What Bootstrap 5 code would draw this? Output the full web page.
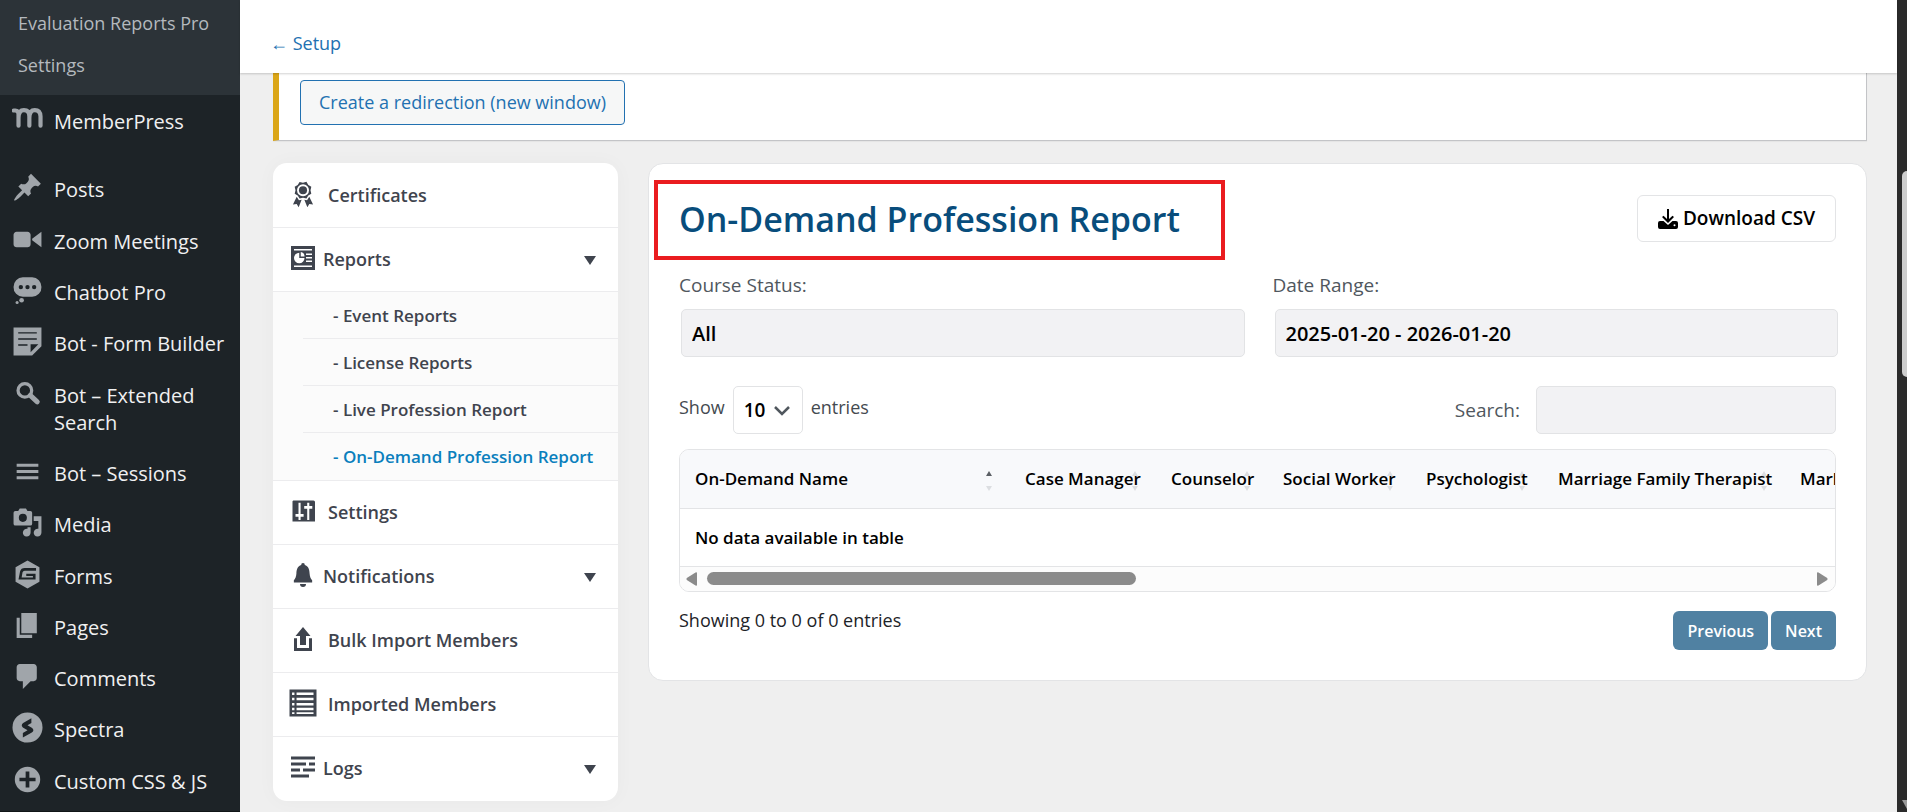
<!DOCTYPE html>
<html lang="en">
<head>
<meta charset="utf-8">
<meta name="viewport" content="width=device-width, initial-scale=1">
<title>On-Demand Profession Report</title>
<link href="https://cdn.jsdelivr.net/npm/bootstrap@5.3.0/dist/css/bootstrap.min.css" rel="stylesheet">
<style>
  :root { --ink: #3f444e; --line: #ececee; --edge: #e3e4e6; --wp-blue: #2271b1; }
  body { font-family: "Open Sans", "Noto Sans", sans-serif; font-size: 20px; line-height: 27px; background: #efefef; color: #1d2327; }
  a { text-decoration: none; }
  .icon { fill: currentColor; flex: none; }

  /* admin menu */
  .admin-menu { width: 240px; background: #1d2327; border-bottom: 1px solid #101517; }
  .submenu { background: #2c3338; height: 95px; padding: 10px 0 0 18px; }
  .submenu a { display: block; color: #b4b9be; font-size: 18px; margin-bottom: 15px; }
  .menu-list { padding: 1px 0 4px; }
  .menu-list li { flex: 1 0 auto; }
  .menu-list li.gap-after { margin-bottom: 17px; }
  .menu-list a { color: #f0f0f1; padding: 12px 8px 12px 12px; gap: 11px; }
  .menu-list .icon { width: 31px; height: 31px; margin-top: -4px; margin-bottom: -4px; color: #a0a5aa; }

  /* window scrollbar */
  .page-scroll { width: 10px; background: #2b2b2b; }
  .page-scroll i { top: 171px; left: 5px; right: 0; height: 206px; background: #cdcdcd; border-radius: 5px 0 0 5px; }
  .page-scroll b { bottom: 3px; left: 5px; border: 5px solid transparent; border-top: 9px solid #9b9b9b; border-bottom: 0; border-right: 0; }

  .topbar { height: 73px; padding: 14px 30px 0; box-shadow: 0 1px 2px rgba(0,0,0,.18); z-index: 1; }
  .topbar a, .btn-redirect { color: var(--wp-blue); }
  .topbar a { font-size: 18px; }
  .content { padding: 0 30px 11px 33px; }
  .notice { background: #fff; border: 1px solid #c3c4c7; border-top: 0; border-left: 6px solid #dba617; padding: 7px 21px 15px; box-shadow: 0 1px 1px rgba(0,0,0,.04); }
  .btn-redirect { font-size: 18px; line-height: 27px; padding: 8px 18px; background: #f6f7f7; border-color: var(--wp-blue); border-radius: 4px; }

  /* setup navigation */
  .setup-nav { width: 345px; border-radius: 14px; box-shadow: 0 0 20px rgba(0,0,0,.03); flex: none; color: var(--ink); font-weight: 600; padding-bottom: 1px; }
  .setup-nav a { color: inherit; }
  .nav-row { height: 64px; padding: 0 21px 0 15px; gap: 10px; font-size: 18px; }
  .nav-row.has-sub { gap: 5px; }
  .setup-nav > ul > li + li .nav-row { border-top: 1px solid var(--line); }
  .nav-row .icon { width: 30px; height: 30px; margin-top: -3px; }
  .nav-row .caret { width: 14px; height: 10px; margin: 0 0 0 auto; }
  .sub-list { background: #fbfbfb; border-top: 1px solid var(--line); padding: 0 0 1px 30px; font-size: 17px; }
  .sub-list li + li { border-top: 1px solid var(--line); }
  .sub-list a { display: block; padding: 10px 0 9px 30px; }
  .sub-list a.active { color: #0a7fbd; }

  /* report card */
  .report { border: 1px solid var(--edge); border-radius: 15px; padding: 16px 30px 30px; margin-left: 30px; min-width: 0; }
  .title-box { border: 4px solid #ea1c1f; margin-left: -25px; padding: 13px 41px 15px 21px; height: 80px; }
  .title-box h1 { font-size: 34px; line-height: 44px; font-weight: 600; color: #084d7c; }
  .btn-csv { margin-top: 15px; height: 47px; padding: 0 20px; border: 1px solid var(--edge); border-radius: 6px; font-size: 19px; font-weight: 600; color: #000; background: #fff; gap: 5px; }
  .field-label { color: #50575e; font-size: 19px; font-weight: 500; }
  .box-field { height: 48px; border: 1px solid #e2e3e5; border-radius: 5px; background: #f2f2f4; padding: 1px 10px 0; font-size: 20px; font-weight: 600; color: #000; appearance: none; }
  .filters { gap: 28px; margin: 12px -2px 0 0; }
  .filters .box-field { width: calc(100% - 2px); margin: 10px 0 0 2px; }
  .tools { margin-top: 29px; }
  .entries { font-size: 18px; color: #444a50; }
  .len-select { width: 70px; height: 48px; border: 1px solid #e2e3e5; border-radius: 5px; font-size: 19px; font-weight: 600; color: #000; padding: 1px 10px 0; appearance: none; background: #fff; }
  .len-wrap svg { right: 12px; top: 19px; pointer-events: none; }
  .search-input { width: 300px; }

  .grid-wrap { border: 1px solid var(--edge); border-radius: 10px; overflow: hidden; margin-top: 15px; }
  .grid-clip { overflow: hidden; }
  .report-grid { table-layout: fixed; width: 2600px; border-collapse: collapse; font-size: 17px; font-weight: 600; color: #000; }
  .report-grid th, .report-grid td { padding: 15px; height: 58px; border-bottom: 1px solid var(--edge); white-space: nowrap; }
  .report-grid th { background: #f8f9fb; font-weight: 600; }
  .sorter { right: 17px; top: 21px; width: 8px; height: 20px; color: #dcdee1; z-index: 0; }
  .report-grid th span { position: relative; z-index: 1; }
  .hbar { height: 24px; background: #fcfcfc; padding: 0 7px 0 6px; gap: 10px; }
  .hbar .track { height: 13px; }
  .hbar .thumb { height: 13px; background: #8b8b8b; border-radius: 7px; }
  .foot { margin-top: 14px; }
  .foot p { font-size: 18px; padding-top: 1px; }
  .pager { gap: 3px; margin-top: 5px; }
  .pager button { height: 39px; padding: 2px 14px 0; border: 0; border-radius: 6px; background: #5081a2; color: #fff; font-size: 16px; font-weight: 600; }
</style>
</head>
<body>
<div class="d-flex align-items-stretch min-vh-100">

  <nav class="admin-menu d-flex flex-column flex-shrink-0 min-vh-100" aria-label="Admin menu">
    <div class="submenu">
      <a href="#">Evaluation Reports Pro</a>
      <a href="#">Settings</a>
    </div>
    <ul class="menu-list list-unstyled mb-0 d-flex flex-column flex-grow-1">
      <li class="gap-after"><a class="d-flex" href="#"><svg class="icon" viewBox="0 0 20 20"><path fill="none" stroke="currentColor" stroke-width="2.700" stroke-linecap="round" d="M1.200 4.200h.9Q4.200 4.300 4.200 6.500v7.500M4.200 9Q4.200 4 7.700 4T11.200 8v6M11.200 9Q11.200 4 14.700 4T18.400 8v6"/></svg>MemberPress</a></li>
      <li><a class="d-flex" href="#"><svg class="icon" viewBox="0 0 20 20"><path d="M10.440 3.020l1.820-1.820 6.360 6.350-1.830 1.820c-1.050-.68-2.480-.57-3.410.36l-.75.75c-.92.93-1.040 2.350-.35 3.410l-1.830 1.820-2.410-2.410-2.800 2.790c-.42.42-3.380 2.710-3.800 2.290s1.860-3.390 2.280-3.810l2.790-2.790L4.100 9.360l1.830-1.820c1.050.69 2.480.57 3.400-.36l.75-.75c.93-.92 1.050-2.350.36-3.410z"/></svg>Posts</a></li>
      <li><a class="d-flex" href="#"><svg class="icon" viewBox="0 0 20 20"><path d="M12 13V7c0-1.100-.9-2-2-2H3c-1.100 0-2 .9-2 2v6c0 1.100.9 2 2 2h7c1.100 0 2-.9 2-2zm1-2.500l6 4.500V5l-6 4.500v1z"/></svg>Zoom Meetings</a></li>
      <li><a class="d-flex" href="#"><svg class="icon" viewBox="0 0 20 20"><path fill-rule="evenodd" d="M7 1.500h6a6 6 0 0 1 6 6.200A6 6 0 0 1 13 14H7a6 6 0 0 1-6-6.300A6 6 0 0 1 7 1.500zM5.700 6.400a1.400 1.400 0 1 0 0 2.800 1.400 1.400 0 0 0 0-2.800zm4.300 0a1.400 1.400 0 1 0 0 2.800 1.400 1.400 0 0 0 0-2.800zm4.300 0a1.400 1.400 0 1 0 0 2.800 1.400 1.400 0 0 0 0-2.800z"/><circle cx="6.200" cy="16.300" r="1.500"/><circle cx="3.300" cy="17.700" r="1"/></svg>Chatbot Pro</a></li>
      <li><a class="d-flex" href="#"><svg class="icon" viewBox="0 0 20 20"><path fill-rule="evenodd" d="M1 1h18v12l-6 6H1zM4 4v.9h12V4zm0 3.900v.9h12v-.9zm0 3.900v.9h6v-.9zm8 0V17l5-5.200z"/></svg>Bot - Form Builder</a></li>
      <li><a class="d-flex" href="#"><svg class="icon" viewBox="0 0 20 20"><circle cx="8.300" cy="8" r="4.400" fill="none" stroke="currentColor" stroke-width="2.100"/><path d="M11.800 11.200l4.500 4.200" stroke="currentColor" stroke-width="3.200" stroke-linecap="round"/></svg>Bot – Extended Search</a></li>
      <li><a class="d-flex" href="#"><svg class="icon" viewBox="0 0 20 20"><path d="M3 5h14v2H3zm0 4h14v2H3zm0 4h14v2H3z"/></svg>Bot – Sessions</a></li>
      <li><a class="d-flex" href="#"><svg class="icon" viewBox="0 0 20 20"><path fill-rule="evenodd" d="M5 1h4l1 1.500h1.800A1.200 1.200 0 0 1 13 3.700v7.100a1.200 1.200 0 0 1-1.200 1.200H2.200A1.200 1.200 0 0 1 1 10.800V3.700a1.200 1.200 0 0 1 1.200-1.200H4zM7 4.400a2.600 2.600 0 1 0 0 5.200 2.600 2.600 0 0 0 0-5.200z"/><path d="M14 6h5v10.500a2.500 2.500 0 1 1-2-2.400V9h-3zM12 13v3.500a2.500 2.500 0 1 1-2-2.400V13z"/></svg>Media</a></li>
      <li><a class="d-flex" href="#"><svg class="icon" viewBox="0 0 20 20"><path fill-rule="evenodd" d="M10 1l7.700 4.300v9.400L10 19l-7.700-4.300V5.300zM15.500 5.800H8.200Q5.800 5.800 5.200 8l-1 5.300h11V9.500h-6V11h4.300v.9H6.200L6.800 8.500q.3-1 1.400-1h7.300z"/></svg>Forms</a></li>
      <li><a class="d-flex" href="#"><svg class="icon" viewBox="0 0 20 20"><path d="M6 15V2h10v13H6zm-1 1h8v2H3V5h2v11z"/></svg>Pages</a></li>
      <li><a class="d-flex" href="#"><svg class="icon" viewBox="0 0 20 20"><path d="M5 2h9c1.100 0 2 .9 2 2v7c0 1.100-.9 2-2 2h-2l-5 5v-5H5c-1.100 0-2-.9-2-2V4c0-1.100.9-2 2-2z"/></svg>Comments</a></li>
      <li><a class="d-flex" href="#"><svg class="icon" viewBox="0 0 20 20"><path fill-rule="evenodd" d="M10 .3a9.700 9.700 0 1 1 0 19.400A9.700 9.700 0 0 1 10 .3zM12.500 4L7.200 7.100Q5.500 8.500 7 10l3 1.800-3 1.700v3l5.800-3.200q1.900-1.500.2-3l-3-1.700 2.500-1.500z"/></svg>Spectra</a></li>
      <li><a class="d-flex" href="#"><svg class="icon" viewBox="0 0 20 20"><path fill-rule="evenodd" d="M10 1.800a8.200 8.200 0 1 1 0 16.400 8.200 8.200 0 0 1 0-16.400zM8.800 4.800v4H4.800v2.400h4v4h2.400v-4h4V8.800h-4v-4z"/></svg>Custom CSS &amp; JS</a></li>
    </ul>
  </nav>

  <div class="flex-grow-1 d-flex flex-column" style="min-width:0">
    <header class="topbar bg-white d-flex align-items-center position-relative"><a href="#">← Setup</a></header>

    <main class="content">
      <div class="notice"><button type="button" class="btn btn-redirect">Create a redirection (new window)</button></div>

      <div class="d-flex align-items-start" style="margin-top:22px">
        <nav class="setup-nav bg-white overflow-hidden" aria-label="Setup">
          <ul class="list-unstyled mb-0">
            <li><a class="nav-row d-flex align-items-center" href="#"><svg class="icon" viewBox="0 0 20 20"><path fill-rule="evenodd" d="M4.460 5.160L5 7.460l-.54 2.290 2.010 1.240L7.700 13l2.300-.54 2.300.54 1.230-2.010 2.010-1.240L15 7.460l.54-2.300-2-1.240-1.240-2.010-2.300.55-2.290-.54-1.250 2zm5.550 6.340a4 4 0 1 1 0-8 4 4 0 0 1 0 8z"/><circle cx="10" cy="7.500" r="2.700"/><path d="M5.800 11.800l1.500 2.300 1.800-.2-2 5-1.300-2.200L3.300 17zM14.200 11.800l-1.500 2.300-1.800-.2 2 5 1.300-2.200 2.500.3z"/></svg>Certificates</a></li>
            <li><a class="nav-row has-sub d-flex align-items-center" href="#"><svg class="icon" viewBox="0 0 20 20"><path fill-rule="evenodd" d="M2 2h16v16H2zM4 4v1h12V4zm3.500 2.500A3.500 3.500 0 1 0 11 10H7.500zM8.500 6v3H11A3 3 0 0 0 8.500 6zM12 7v1h4V7zm0 2.300v1h4v-1zm0 2.400v1h4v-1zM4 15v1h12v-1z"/></svg>Reports<svg class="icon caret" viewBox="0 0 14 10"><path d="M1 1h12L7 10z"/></svg></a>
              <ul class="sub-list list-unstyled mb-0">
                <li><a href="#">- Event Reports</a></li>
                <li><a href="#">- License Reports</a></li>
                <li><a href="#">- Live Profession Report</a></li>
                <li><a class="active" href="#">- On-Demand Profession Report</a></li>
              </ul>
            </li>
            <li><a class="nav-row d-flex align-items-center" href="#"><svg class="icon" viewBox="0 0 20 20"><path fill-rule="evenodd" d="M3.500 3H17a1 1 0 0 1 1 1v13H3V3.500zM7 4.500V12H5v1.800h2V16h1.400v-2.200h2V12h-2V4.500zm5.800 0v2.200h-2v1.800h2V16h1.400V8.500h2V6.700h-2V4.500z"/></svg>Settings</a></li>
            <li><a class="nav-row has-sub d-flex align-items-center" href="#"><svg class="icon" viewBox="0 0 20 20"><path d="M10 2a1.200 1.200 0 0 1 1.200 1.300C13.500 4 14.300 6 14.400 9c.1 2 .7 3.500 1.700 4.500V15H3.900v-1.500c1-1 1.600-2.500 1.700-4.500.1-3 .9-5 3.200-5.700A1.200 1.200 0 0 1 10 2zM8 16h4a2 2 0 0 1-4 0z"/></svg>Notifications<svg class="icon caret" viewBox="0 0 14 10"><path d="M1 1h12L7 10z"/></svg></a></li>
            <li><a class="nav-row d-flex align-items-center" href="#"><svg class="icon" viewBox="0 0 20 20"><path d="M8 14V8H5l5-6 5 6h-3v6H8zm-2 2V9.500H4V18h12V9.500h-2V16H6z"/></svg>Bulk Import Members</a></li>
            <li><a class="nav-row d-flex align-items-center" href="#"><svg class="icon" viewBox="0 0 20 20"><path fill-rule="evenodd" d="M1 1h18v18H1zM2.700 3v1.700h1.600V3zm3 0v1.700H17V3zm-3 3.500v1.700h1.600V6.500zm3 0v1.700H17V6.500zM2.700 10v1.700h1.600V10zm3 0v1.700H17V10zm-3 3.200v1.600h1.600v-1.600zm3 0v1.600H17v-1.600zM2.700 16.200v1.200h1.600v-1.200zm3 0v1.200H17v-1.200z"/></svg>Imported Members</a></li>
            <li><a class="nav-row has-sub d-flex align-items-center" href="#"><svg class="icon" viewBox="0 0 20 20"><path d="M2 3h16v2H2zm0 4h10v2H2zm12 0h4v2h-4zM2 11h6v2H2zm8 0h8v2h-8zM2 15h12v2H2z"/></svg>Logs<svg class="icon caret" viewBox="0 0 14 10"><path d="M1 1h12L7 10z"/></svg></a></li>
          </ul>
        </nav>

        <section class="report bg-white flex-grow-1">
          <div class="d-flex justify-content-between align-items-start">
            <div class="title-box"><h1 class="mb-0">On-Demand Profession Report</h1></div>
            <button type="button" class="btn btn-csv d-flex align-items-center"><svg class="icon" width="20" height="20" viewBox="0 0 20 20"><path d="M9 0h2v10l3.500-3.300L16 8l-6 6-6-6 1.500-1.300L9 10z"/><path fill-rule="evenodd" d="M2 12h3.500L10 16l4.500-4H18a2 2 0 0 1 2 2v4a2 2 0 0 1-2 2H2a2 2 0 0 1-2-2v-4a2 2 0 0 1 2-2zm14.500 3.200a1 1 0 1 0 0 2 1 1 0 0 0 0-2z"/></svg>Download CSV</button>
          </div>

          <div class="filters d-flex">
            <div class="flex-fill w-50"><label class="field-label d-block" for="status">Course Status:</label>
              <select id="status" class="box-field"><option>All</option></select></div>
            <div class="flex-fill w-50"><label class="field-label d-block" for="range">Date Range:</label>
              <input id="range" type="text" class="box-field" value="2025-01-20 - 2026-01-20"></div>
          </div>

          <div class="tools d-flex justify-content-between">
            <div class="entries d-flex gap-2">
              <label for="len" class="pt-2">Show</label>
              <span class="len-wrap position-relative"><select id="len" class="len-select"><option>10</option></select><svg class="position-absolute" width="18" height="12" viewBox="0 0 18 12"><path d="M2 2l7 7 7-7" fill="none" stroke="#50575e" stroke-width="2.500"/></svg></span>
              <span class="pt-2">entries</span>
            </div>
            <div class="d-flex align-items-center"><label for="search" class="field-label me-3">Search:</label><input id="search" type="text" class="box-field search-input"></div>
          </div>

          <div class="grid-wrap">
            <div class="grid-clip">
              <table class="report-grid">
                <colgroup><col style="width:330px"><col style="width:146px"><col style="width:112px"><col style="width:143px"><col style="width:132px"><col style="width:242px"><col></colgroup>
                <thead><tr>
                  <th class="position-relative"><span>On-Demand Name</span><svg class="sorter position-absolute" viewBox="0 0 8 20"><path d="M4 0l3 5H1z" fill="#5b5f64"/><path d="M4 20l3-5H1z" fill="currentColor"/></svg></th>
                  <th class="position-relative"><span>Case Manager</span><svg class="sorter position-absolute" viewBox="0 0 8 20"><path d="M4 0l3 5H1zM4 20l3-5H1z" fill="currentColor"/></svg></th>
                  <th class="position-relative"><span>Counselor</span><svg class="sorter position-absolute" viewBox="0 0 8 20"><path d="M4 0l3 5H1zM4 20l3-5H1z" fill="currentColor"/></svg></th>
                  <th class="position-relative"><span>Social Worker</span><svg class="sorter position-absolute" viewBox="0 0 8 20"><path d="M4 0l3 5H1zM4 20l3-5H1z" fill="currentColor"/></svg></th>
                  <th class="position-relative"><span>Psychologist</span><svg class="sorter position-absolute" viewBox="0 0 8 20"><path d="M4 0l3 5H1zM4 20l3-5H1z" fill="currentColor"/></svg></th>
                  <th class="position-relative"><span>Marriage Family Therapist</span><svg class="sorter position-absolute" viewBox="0 0 8 20"><path d="M4 0l3 5H1zM4 20l3-5H1z" fill="currentColor"/></svg></th>
                  <th>Mark</th>
                </tr></thead>
                <tbody><tr><td colspan="7">No data available in table</td></tr></tbody>
              </table>
            </div>
            <div class="hbar d-flex align-items-center">
              <svg width="11" height="14" viewBox="0 0 11 14"><path d="M11 1v12q0 1-1.500.5L.8 8Q0 7 .8 6L9.500.5Q11 0 11 1z" fill="#8b8b8b"/></svg>
              <div class="track flex-grow-1"><div class="thumb" style="width:39%"></div></div>
              <svg width="11" height="14" viewBox="0 0 11 14"><path d="M0 1v12q0 1 1.500.5L10.200 8q.8-1 0-2L1.500.5Q0 0 0 1z" fill="#8b8b8b"/></svg>
            </div>
          </div>

          <div class="foot d-flex justify-content-between">
            <p class="mb-0">Showing 0 to 0 of 0 entries</p>
            <div class="pager d-flex"><button type="button">Previous</button><button type="button">Next</button></div>
          </div>
        </section>
      </div>
    </main>
  </div>

  <div class="page-scroll flex-shrink-0 position-relative overflow-hidden" aria-hidden="true"><i class="position-absolute"></i><b class="position-absolute"></b></div>
</div>
<script src="https://cdn.jsdelivr.net/npm/bootstrap@5.3.0/dist/js/bootstrap.bundle.min.js"></script>
</body>
</html>
